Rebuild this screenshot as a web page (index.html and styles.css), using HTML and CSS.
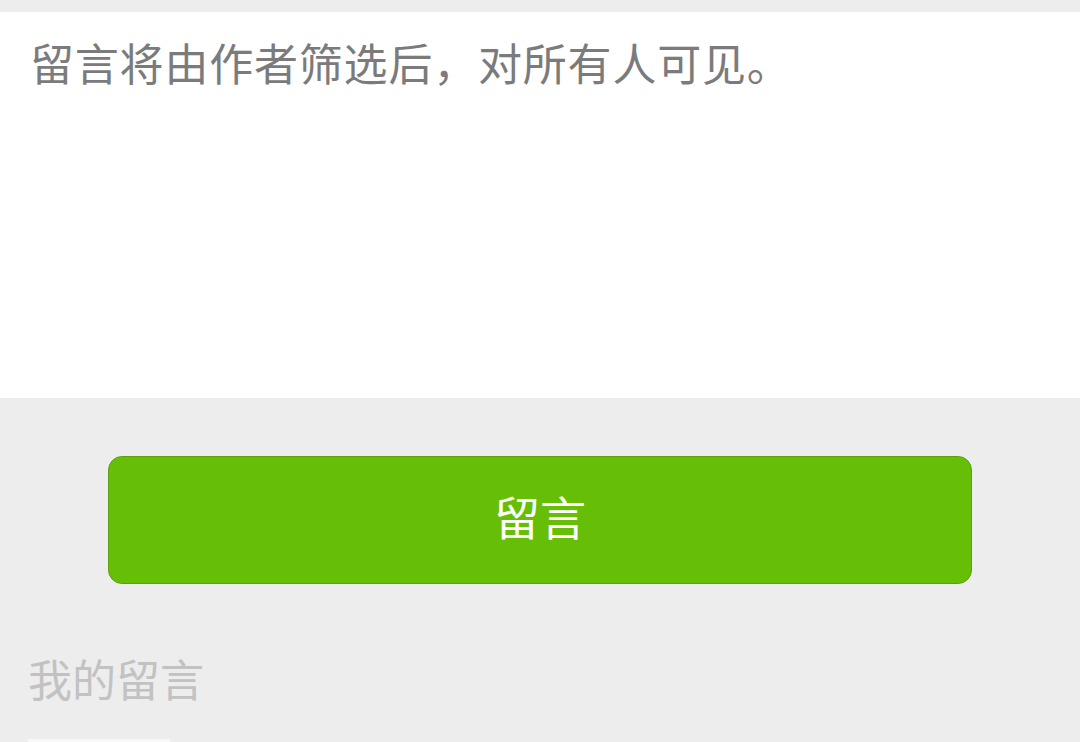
FILE: index.html
```html
<!DOCTYPE html>
<html lang="zh-CN">
<head>
<meta charset="utf-8">
<link rel="stylesheet" href="styles.css">
</head>
<body>
<div class="page">
  <div class="editor">
    <div class="placeholder">留言将由作者筛选后，对所有人可见。</div>
  </div>
  <div class="actions">
    <button class="submit">留言</button>
  </div>
  <div class="mine-title">我的留言</div>
  <div class="mine-list"></div>
</div>
</body>
</html>
```

FILE: styles.css
```css
html, body {
  margin: 0;
  padding: 0;
  background: #ededed;
  height: 100%;
  overflow: hidden;
}
.page {
  font-family: "Noto Sans CJK SC", "Noto Sans", sans-serif;
  padding-top: 12px;
}
.editor {
  background: #ffffff;
  height: 386px;
  padding: 28px 30px 0;
  box-sizing: border-box;
}
.placeholder {
  font-size: 44px;
  line-height: 44px;
  color: #7b7b7b;
  letter-spacing: 0.8px;
}
.actions {
  padding: 58px 108px 0;
}
.submit {
  display: flex;
  align-items: center;
  justify-content: center;
  width: 100%;
  height: 128px;
  background: #66bf06;
  border: 1px solid #5aa20c;
  border-radius: 14px;
  color: #ffffff;
  font-family: "Noto Sans CJK SC", "Noto Sans", sans-serif;
  font-size: 46px;
  line-height: 46px;
  padding: 0 0 10px;
  box-sizing: border-box;
}
.mine-title {
  padding: 72px 28px 0;
  font-size: 44px;
  line-height: 44px;
  color: #c2c2c2;
}
.mine-list {
  margin: 39px 0 0 28px;
  width: 142px;
  height: 10px;
  background: #f8f8f8;
}
```
